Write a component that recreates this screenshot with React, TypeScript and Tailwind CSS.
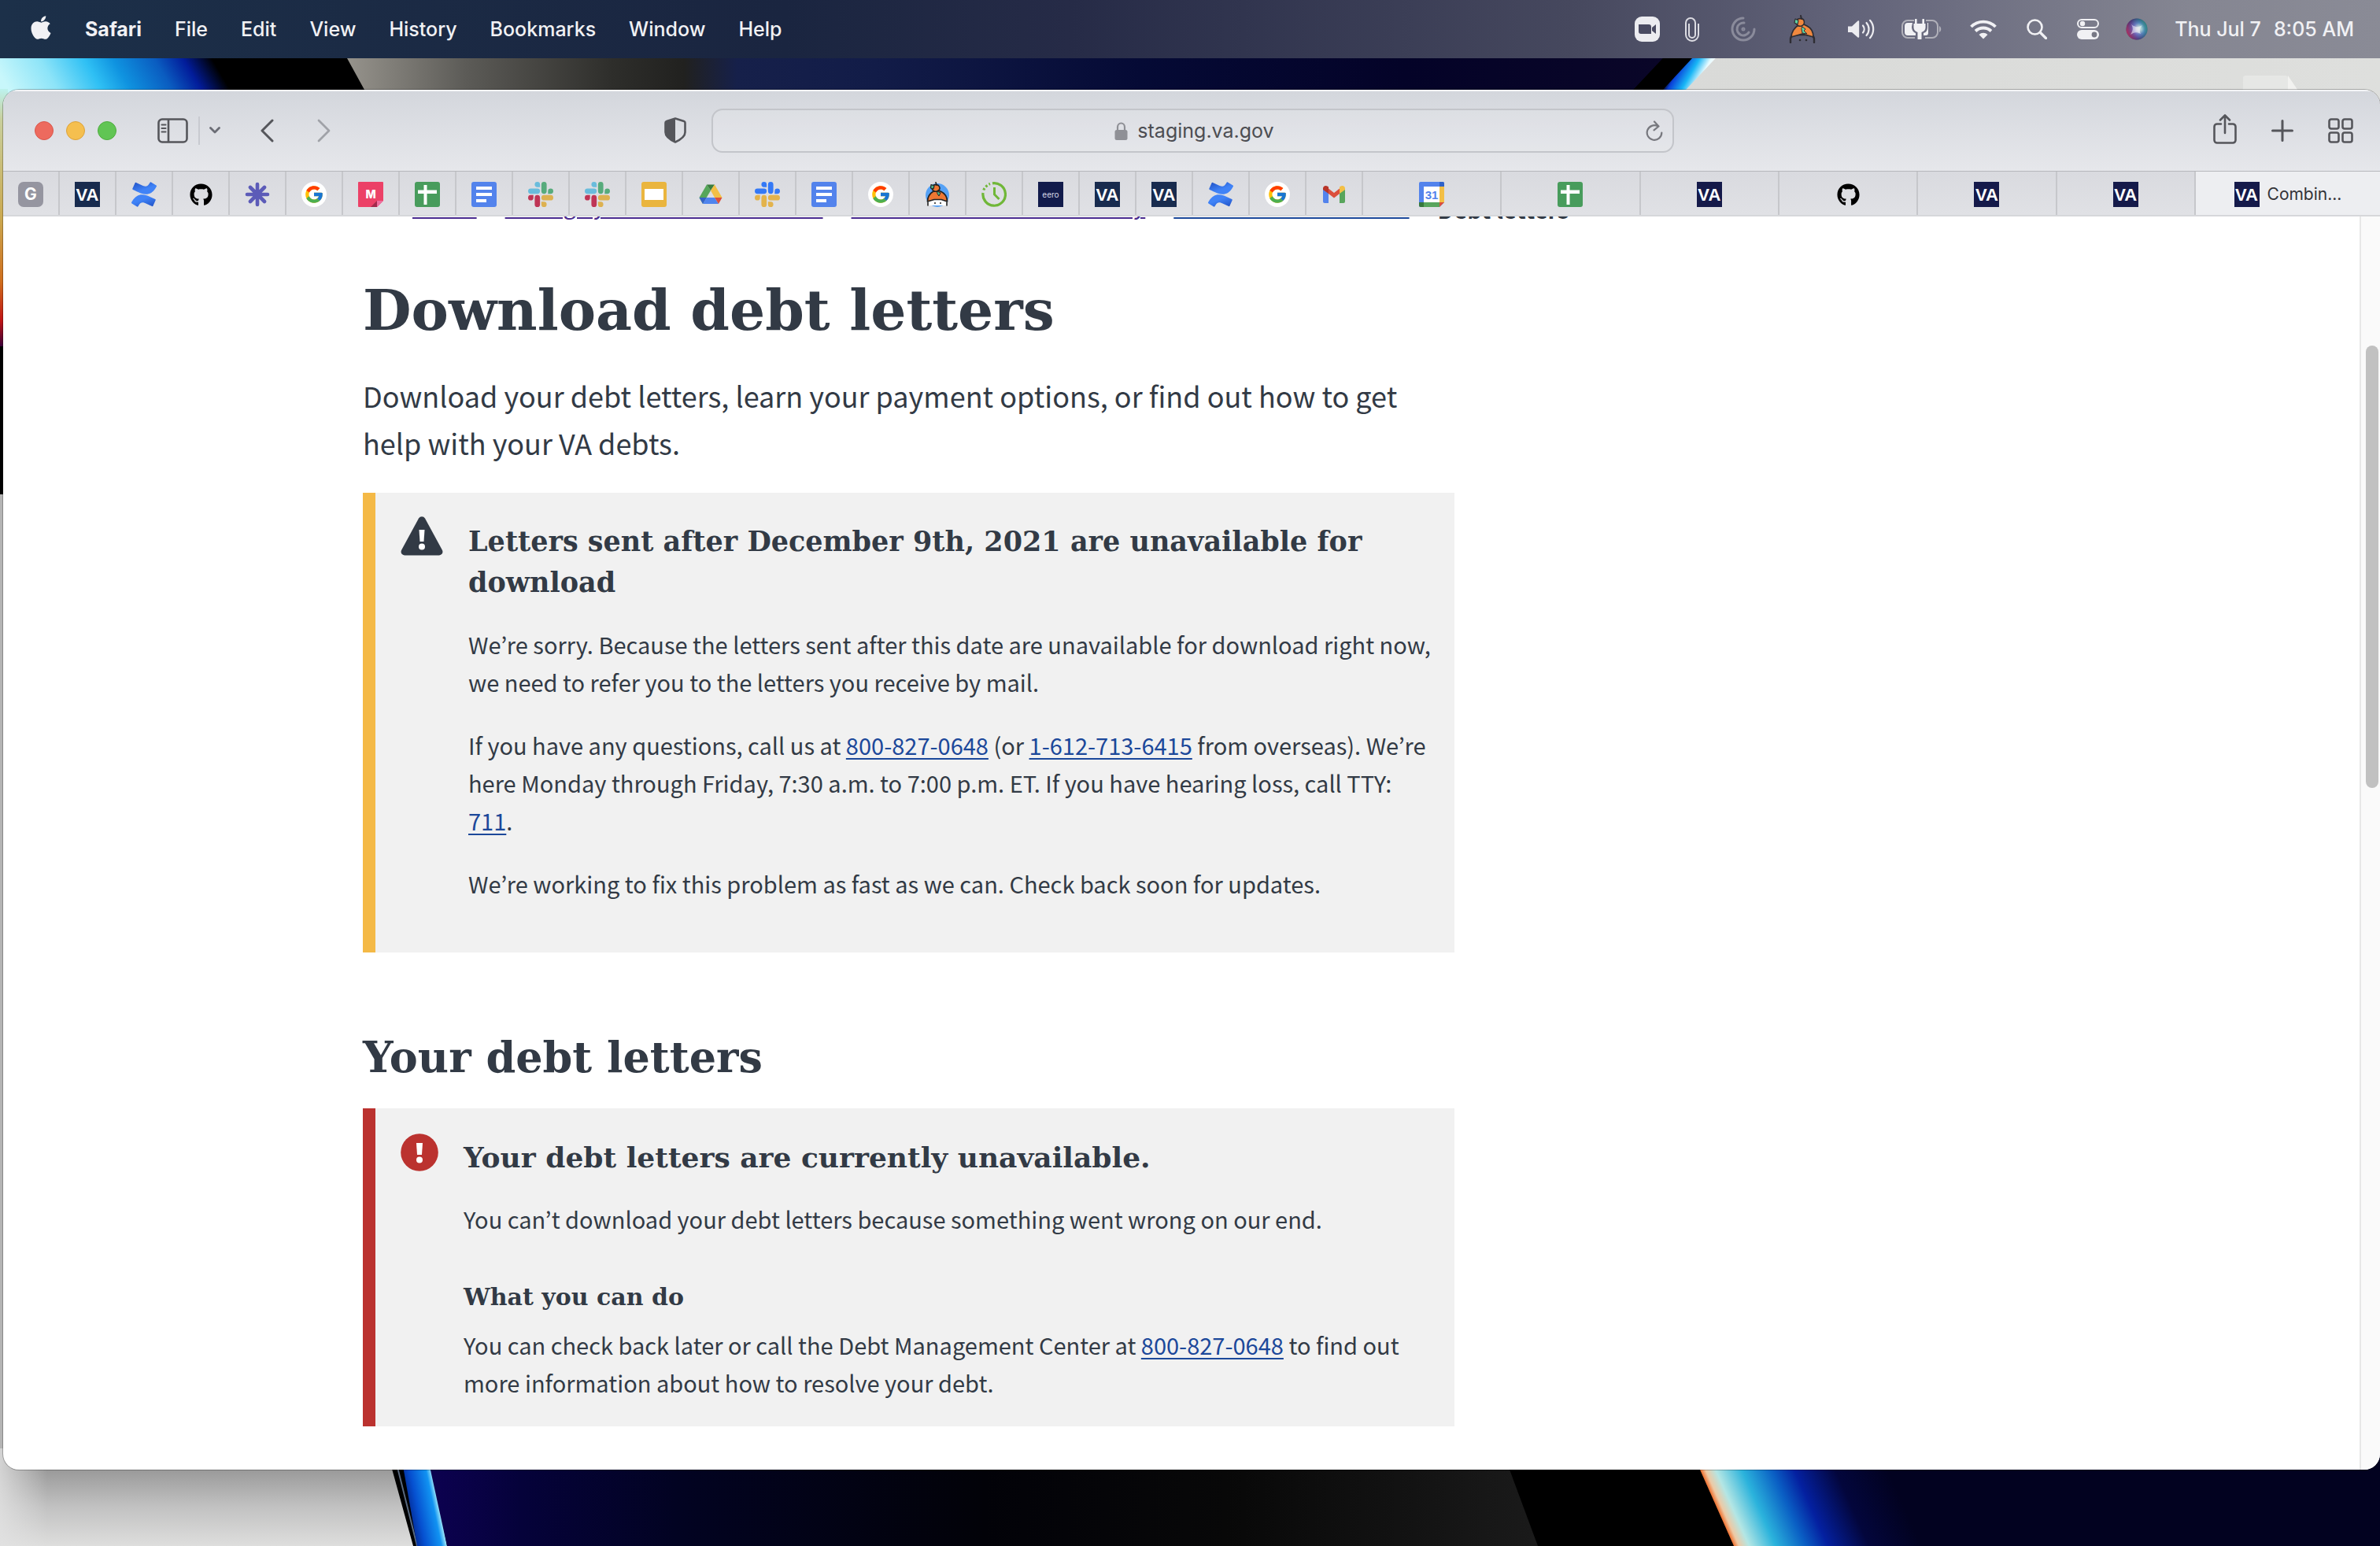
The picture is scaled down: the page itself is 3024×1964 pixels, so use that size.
import React from "react";
import { FaApple, FaGithub } from "react-icons/fa";
import { FcGoogle } from "react-icons/fc";

const SERIF = "font-['DejaVu_Serif',serif] font-bold";
const SANS = "font-['Noto_Sans_CJK_KR','Noto_Sans',sans-serif]";

/* ---------- wallpaper ---------- */

function Wallpaper() {
  return (
    <svg
      className="absolute inset-0 h-full w-full"
      viewBox="0 0 3024 1964"
      preserveAspectRatio="none"
      aria-hidden="true"
    >
      <defs>
        <linearGradient id="w-tl" x1="0" x2="208" y1="94" y2="-29" gradientUnits="userSpaceOnUse">
          <stop offset="0" stopColor="#c8f7fb" />
          <stop offset="0.22" stopColor="#8de4f8" />
          <stop offset="0.42" stopColor="#2fc0f4" />
          <stop offset="0.55" stopColor="#0f93e0" />
          <stop offset="0.74" stopColor="#0a5cc0" />
          <stop offset="0.87" stopColor="#021c9a" />
          <stop offset="1" stopColor="#000" />
        </linearGradient>
        <linearGradient id="w-tm" x1="441" x2="2120" y1="0" y2="0" gradientUnits="userSpaceOnUse">
          <stop offset="0" stopColor="#96938c" />
          <stop offset="0.09" stopColor="#5c5b57" />
          <stop offset="0.2" stopColor="#2e2e2b" />
          <stop offset="0.255" stopColor="#21211f" />
          <stop offset="0.295" stopColor="#16204a" />
          <stop offset="0.4" stopColor="#121c48" />
          <stop offset="0.6" stopColor="#050a35" />
          <stop offset="0.8" stopColor="#040328" />
          <stop offset="1" stopColor="#0a0628" />
        </linearGradient>
        <linearGradient id="w-ts" x1="2122" x2="2160" y1="95" y2="117" gradientUnits="userSpaceOnUse">
          <stop offset="0" stopColor="#000" />
          <stop offset="0.15" stopColor="#0a3fd8" />
          <stop offset="0.5" stopColor="#18b6f6" />
          <stop offset="0.8" stopColor="#e8fbff" />
          <stop offset="1" stopColor="#fafafa" />
        </linearGradient>
        <linearGradient id="w-tr" x1="2140" x2="3024" y1="0" y2="0" gradientUnits="userSpaceOnUse">
          <stop offset="0" stopColor="#d9dad8" />
          <stop offset="1" stopColor="#dedfdd" />
        </linearGradient>
        <linearGradient id="w-l" x1="0" x2="0" y1="113" y2="440" gradientUnits="userSpaceOnUse">
          <stop offset="0" stopColor="#bdf2ee" />
          <stop offset="0.12" stopColor="#c9cf9c" />
          <stop offset="0.5" stopColor="#cba950" />
          <stop offset="0.75" stopColor="#cf6d1c" />
          <stop offset="0.9" stopColor="#c01414" />
          <stop offset="1" stopColor="#3a0038" />
        </linearGradient>
        <linearGradient id="w-bl" x1="0" x2="0" y1="1866" y2="1964" gradientUnits="userSpaceOnUse">
          <stop offset="0" stopColor="#999" />
          <stop offset="0.5" stopColor="#c2c2c2" />
          <stop offset="1" stopColor="#dededd" />
        </linearGradient>
        <linearGradient id="w-blx" x1="0" x2="60" y1="0" y2="0" gradientUnits="userSpaceOnUse">
          <stop offset="0" stopColor="#e2e2e2" stopOpacity="0.8" />
          <stop offset="1" stopColor="#e2e2e2" stopOpacity="0" />
        </linearGradient>
        <linearGradient id="w-bs" x1="512" x2="556" y1="1915" y2="1906" gradientUnits="userSpaceOnUse">
          <stop offset="0" stopColor="#02187a" />
          <stop offset="0.4" stopColor="#0650d0" />
          <stop offset="0.85" stopColor="#1193f2" />
          <stop offset="1" stopColor="#9fe8fa" />
        </linearGradient>
        <linearGradient id="w-bm" x1="550" x2="1950" y1="0" y2="0" gradientUnits="userSpaceOnUse">
          <stop offset="0" stopColor="#0c0150" />
          <stop offset="0.08" stopColor="#05023a" />
          <stop offset="0.22" stopColor="#020322" />
          <stop offset="0.5" stopColor="#020208" />
          <stop offset="0.72" stopColor="#080808" />
          <stop offset="1" stopColor="#1a1a1a" />
        </linearGradient>
        <linearGradient id="w-br" x1="2182" x2="2381" y1="1915" y2="1827" gradientUnits="userSpaceOnUse">
          <stop offset="0" stopColor="#f0793a" />
          <stop offset="0.025" stopColor="#eec9a4" />
          <stop offset="0.08" stopColor="#b4e6e4" />
          <stop offset="0.22" stopColor="#2bb3dc" />
          <stop offset="0.38" stopColor="#0a5fc4" />
          <stop offset="0.5" stopColor="#0420a0" />
          <stop offset="0.72" stopColor="#03063c" />
          <stop offset="1" stopColor="#020220" />
        </linearGradient>
      </defs>
      <rect width="3024" height="1964" fill="#000" />
      <rect y="60" width="310" height="70" fill="url(#w-tl)" />
      <path d="M433 60 441 74 463 114 470 130H2060L2126 60Z" fill="url(#w-tm)" />
      <path d="M2126 60 2064 130H2098L2163 60Z" fill="#000" />
      <path d="M2163 60 2098 130H2135L2193 60Z" fill="url(#w-ts)" />
      <path d="M2193 60 2127 130H3024V60Z" fill="url(#w-tr)" />
      <rect x="2850" y="96" width="57" height="30" rx="3" fill="#e6e7e5" />
      <path d="M2907 96V130H2930Z" fill="#f2f2f0" />
      <rect y="113" width="10" height="327" fill="url(#w-l)" />
      <rect y="628" width="10" height="1242" fill="#b4b4b4" />
      <path d="M0 1840H490L498 1866 525 1964H0Z" fill="url(#w-bl)" />
      <path d="M0 1840H60V1964H0Z" fill="url(#w-blx)" />
      <path d="M504 1860 530 1964" stroke="#5a6a80" strokeWidth="2" />
      <path d="M508 1840 530 1964H568L545 1840Z" fill="url(#w-bs)" />
      <path d="M541 1840 568 1964H1954L1908 1840Z" fill="url(#w-bm)" />
      <path d="M2148 1840 2203 1964H3024V1840Z" fill="url(#w-br)" />
    </svg>
  );
}

/* ---------- menu bar ---------- */

const MENUS = ["File", "Edit", "View", "History", "Bookmarks", "Window", "Help"];

function ZoomIcon() {
  return (
    <svg width="32" height="32" viewBox="0 0 32 32">
      <rect width="32" height="32" rx="9" fill="#ececf0" />
      <path d="M5 10h13a3 3 0 0 1 3 3v9H8a3 3 0 0 1-3-3ZM22 14l5-4v12l-5-4Z" fill="#4a4b62" />
    </svg>
  );
}

function ClipIcon() {
  return (
    <svg width="18" height="32" viewBox="0 0 18 32" fill="none" stroke="#dcdce2" strokeWidth="2">
      <path d="M17 9v14a8 8 0 0 1-16 0V8a6 6 0 0 1 12 0v15a4 4 0 0 1-8 0V9" />
    </svg>
  );
}

function SwirlIcon() {
  return (
    <svg width="32" height="32" viewBox="0 0 32 32" fill="none" stroke="#8a8b9b" strokeWidth="3" strokeLinecap="round">
      <path d="M16 2a14 14 0 1 0 14 14" />
      <path d="M17 8a8 8 0 1 0 6 12" />
      <circle cx="16" cy="16" r="1" />
    </svg>
  );
}

function MascotIcon() {
  return (
    <svg width="34" height="36" viewBox="0 0 34 36" strokeLinejoin="round" strokeLinecap="round">
      <path d="M2 35v-5C3 24 9 25 17 25s14-1 15 5v5" fill="none" stroke="#2e2d33" strokeWidth="2.4" />
      <path d="M12 13 17 11 23 14C29 17 31 23 31 28L24 26 17 24 10 26 3 28C3 22 7 16 12 13Z" fill="#f0883e" stroke="#2e2d33" strokeWidth="1.800" />
      <path d="M10 6C12 4 18 4 19 7s0 6-3 7-7-1-7-4Z" fill="#f0883e" stroke="#2e2d33" strokeWidth="1.600" />
      <path d="M8 5 12 7 11 12 7 10Z" fill="#5fd3a2" stroke="#2e2d33" strokeWidth="1.2" />
      <path d="M15 1 16 5" stroke="#2e2d33" strokeWidth="2" />
      <path d="M17 15 21 18 19 20 23 24 17 23 16 18Z" fill="#5fd3a2" stroke="#2e2d33" strokeWidth="1" />
      <circle cx="14" cy="32" r="1.3" fill="#2e2d33" />
      <circle cx="22" cy="32" r="1.3" fill="#2e2d33" />
    </svg>
  );
}

function SpeakerIcon() {
  return (
    <svg width="35" height="26" viewBox="0 0 35 26" fill="none" stroke="#ececf0" strokeWidth="2.2" strokeLinecap="round">
      <path d="M1 9.500h5L13.500 2.500a1 1 0 0 1 1.700.7v19.600a1 1 0 0 1-1.700.7L6 17H1Z" fill="#ececf0" stroke="none" />
      <path d="M20 8.500a7 7 0 0 1 0 9M24.500 5a12 12 0 0 1 0 16M29 1.800a17 17 0 0 1 0 22.400" />
    </svg>
  );
}

function BatteryIcon() {
  return (
    <svg width="51" height="26" viewBox="0 0 51 26">
      <path d="M16 2H8a7 7 0 0 0-7 7v8a7 7 0 0 0 7 7h9M31 2h8a7 7 0 0 1 7 7v8a7 7 0 0 1-7 7h-9" fill="none" stroke="#b0b0b9" strokeWidth="2" />
      <path d="M48 9c3 1.500 3 6.500 0 8Z" fill="#b0b0b9" />
      <path d="M14 5H8a4 4 0 0 0-4 4v8a4 4 0 0 0 4 4h10v-3c-3-1-5-4-5-8ZM33 5v5c0 4-1 7-5 8v3h3a3 3 0 0 0 3-3V5Z" fill="#f1f1f4" />
      <path d="M17 6V1a1.300 1.300 0 0 1 2.600 0v5h6.800V1A1.300 1.300 0 0 1 29 1v5h1.500v5c0 3-2 5-5 6v8a2 2 0 0 1-5 0v-8c-3-1-5-3-5-6V6Z" fill="#f1f1f4" />
    </svg>
  );
}

function WifiIcon() {
  return (
    <svg width="34" height="25" viewBox="0 0 34 25" fill="none" stroke="#f1f1f4" strokeWidth="3.800">
      <path d="M1.500 9a22 22 0 0 1 31 0M7 14.500a14.500 14.500 0 0 1 20 0" />
      <path d="M17 24.500 11.500 19a8 8 0 0 1 11 0Z" fill="#f1f1f4" stroke="none" />
    </svg>
  );
}

function SearchIcon() {
  return (
    <svg width="26" height="26" viewBox="0 0 26 26" fill="none" stroke="#f1f1f4" strokeWidth="2.600" strokeLinecap="round">
      <circle cx="10.500" cy="10.500" r="9" />
      <path d="m17.500 17.500 7 7" strokeWidth="3.200" />
    </svg>
  );
}

function ControlIcon() {
  return (
    <svg width="28" height="26" viewBox="0 0 28 26">
      <rect x="1" y="1" width="26" height="10" rx="5" fill="none" stroke="#f1f1f4" strokeWidth="2" />
      <circle cx="7" cy="6" r="3.200" fill="#f1f1f4" />
      <rect y="14" width="28" height="12" rx="6" fill="#f1f1f4" />
      <circle cx="22" cy="20" r="3.400" fill="#777885" />
    </svg>
  );
}

function SiriIcon() {
  return (
    <svg width="28" height="28" viewBox="0 0 28 28">
      <defs>
        <radialGradient id="siri-a" cx="0.6" cy="0.48" r="0.55">
          <stop offset="0" stopColor="#fff" />
          <stop offset="0.2" stopColor="#d9eafc" />
          <stop offset="0.5" stopColor="#5c7fd4" />
          <stop offset="1" stopColor="#1d2b66" />
        </radialGradient>
        <linearGradient id="siri-b" x1="0" x2="1" y1="0.6" y2="0.2">
          <stop offset="0" stopColor="#e0355f" />
          <stop offset="0.35" stopColor="#a33b86" stopOpacity="0.4" />
          <stop offset="0.7" stopColor="#2a9d6d" stopOpacity="0.4" />
          <stop offset="1" stopColor="#2a9d6d" />
        </linearGradient>
      </defs>
      <circle cx="14" cy="14" r="13.500" fill="url(#siri-a)" />
      <circle cx="14" cy="14" r="13.500" fill="url(#siri-b)" opacity="0.75" />
      <path d="M7 8c5 4 9 4 14 1-3 4-4 7-2 11-5-3-9-2-13 1 3-5 4-8 1-13Z" fill="#fff" opacity="0.5" />
    </svg>
  );
}

function MenuBar() {
  return (
    <header className="relative flex h-[74px] shrink-0 items-center justify-between bg-[linear-gradient(90deg,#1c3049_0%,#1a2540_33%,#262b47_45%,#46485e_66%,#63647a_78%,#858692_92%,#8a8b96_100%)] pl-[38px] pr-[33px] font-['Inter',sans-serif] text-[25px] leading-8 font-medium text-[#f1f1f4]">
      <nav aria-label="Menu bar" className="flex items-center gap-[42px]">
        <button type="button" aria-label="Apple menu" className="-mt-1">
          <FaApple className="h-[34px] w-[28px]" />
        </button>
        <button type="button" className="font-bold">Safari</button>
        {MENUS.map((m) => (
          <button type="button" key={m}>{m}</button>
        ))}
      </nav>
      <div className="flex items-center">
        <div className="mr-[34px] flex items-center">
          <button type="button" aria-label="Zoom" className="mr-8"><ZoomIcon /></button>
          <button type="button" aria-label="Attachments" className="mr-10"><ClipIcon /></button>
          <button type="button" aria-label="Sync" className="mr-[42px]"><SwirlIcon /></button>
          <button type="button" aria-label="Keybase" className="mr-10"><MascotIcon /></button>
          <button type="button" aria-label="Volume" className="mr-[34px]"><SpeakerIcon /></button>
          <button type="button" aria-label="Battery" className="mr-9"><BatteryIcon /></button>
          <button type="button" aria-label="Wi-Fi" className="mr-[38px]"><WifiIcon /></button>
          <button type="button" aria-label="Search" className="mr-[38px]"><SearchIcon /></button>
          <button type="button" aria-label="Control Center" className="mr-[34px]"><ControlIcon /></button>
          <button type="button" aria-label="Siri"><SiriIcon /></button>
        </div>
        <time className="flex gap-4">
          <span>Thu Jul 7</span>
          <span>8:05 AM</span>
        </time>
      </div>
    </header>
  );
}

/* ---------- toolbar ---------- */

function Toolbar() {
  return (
    <div className="grid h-[104px] shrink-0 grid-cols-[900fr_1223fr_897fr] items-center border-b border-[#b6b7bc] bg-[linear-gradient(180deg,#d3d6dc_0%,#dddfe4_50%,#e6e7eb_100%)] text-[#55565b] shadow-[inset_0_2px_0_#f4f5f7]">
      <div className="flex items-center pl-10">
        <div className="flex gap-4">
          <button type="button" aria-label="Close" className="size-6 rounded-full border border-[#d9564b] bg-[#ed6a5e]" />
          <button type="button" aria-label="Minimize" className="size-6 rounded-full border border-[#dca23a] bg-[#f5bf4f]" />
          <button type="button" aria-label="Full screen" className="size-6 rounded-full border border-[#4fac3f] bg-[#61c554]" />
        </div>
        <button type="button" aria-label="Show sidebar" className="ml-[52px]">
          <svg width="39" height="32" viewBox="0 0 39 32" fill="none" stroke="currentColor" strokeWidth="2.600">
            <rect x="1.500" y="1.500" width="36" height="29" rx="4.500" />
            <path d="M14 1.500v29" />
            <path d="M5.500 8.500h5M5.500 13h5M5.500 17.500h5" strokeWidth="2" strokeLinecap="round" />
          </svg>
        </button>
        <span className="ml-[13px] h-9 w-[2px] bg-[#c8cad0]" />
        <button type="button" aria-label="Sidebar options" className="ml-3">
          <svg width="14" height="9" viewBox="0 0 14 9" fill="none" stroke="#6b6d75" strokeWidth="2.800" strokeLinecap="round" strokeLinejoin="round">
            <path d="m1.500 1.500 5.500 5.500 5.500-5.500" />
          </svg>
        </button>
        <button type="button" aria-label="Back" className="ml-[51px]">
          <svg width="17" height="30" viewBox="0 0 17 30" fill="none" stroke="currentColor" strokeWidth="3" strokeLinecap="round" strokeLinejoin="round">
            <path d="M15 2 2 15l13 13" />
          </svg>
        </button>
        <button type="button" aria-label="Forward" className="ml-[55px]">
          <svg width="17" height="30" viewBox="0 0 17 30" fill="none" stroke="#a0a2a8" strokeWidth="2.800" strokeLinecap="round" strokeLinejoin="round">
            <path d="m2 2 13 13L2 28" />
          </svg>
        </button>
        <button type="button" aria-label="Privacy report" className="ml-auto mr-8">
          <svg width="28" height="33" viewBox="0 0 28 33">
            <path d="M14 1.500 25 5a2 2 0 0 1 1.500 2v12c0 6-6 9.500-12.500 12.500C7.500 28.500 1.500 25 1.500 19V7A2 2 0 0 1 3 5Z" fill="none" stroke="#55565b" strokeWidth="2.600" strokeLinejoin="round" />
            <path d="M14 1.500V31.500C7.500 28.500 1.500 25 1.500 19V7A2 2 0 0 1 3 5Z" fill="#55565b" />
          </svg>
        </button>
      </div>
      <div className="relative flex h-14 items-center justify-center gap-3 rounded-[14px] border-2 border-[#c3c5ca] bg-white/10 pl-1 pt-[2px] font-['Inter',sans-serif] text-[25px] text-[#4c4d52]">
        <svg width="17" height="24" viewBox="0 0 17 24">
          <path d="M4 12V6.500a4.500 5 0 0 1 9 0V12" fill="none" stroke="#8f9096" strokeWidth="2.200" />
          <rect x="0.500" y="10" width="16" height="13" rx="2.500" fill="#8f9096" />
        </svg>
        <span>staging.va.gov</span>
        <button type="button" aria-label="Reload" className="absolute right-3">
          <svg width="22" height="27" viewBox="0 0 22 27" fill="none" stroke="#77787e" strokeWidth="2.200" strokeLinecap="round" strokeLinejoin="round">
            <path d="M15.500 7.400A9.300 9.300 0 1 0 20.300 15.500M11 1.500l5.500 6-6 4.800" />
          </svg>
        </button>
      </div>
      <div className="flex items-center justify-end gap-11 pr-[34px]">
        <button type="button" aria-label="Share" className="-mt-1">
          <svg width="30" height="38" viewBox="0 0 30 38" fill="none" stroke="currentColor" strokeWidth="2.600" strokeLinecap="round" strokeLinejoin="round">
            <path d="M10 12.500H5A3.500 3.500 0 0 0 1.500 16v17A3.500 3.500 0 0 0 5 36.500h20a3.500 3.500 0 0 0 3.500-3.500V16a3.500 3.500 0 0 0-3.500-3.500h-5M15 24V2M9 7.500 15 1.500l6 6" />
          </svg>
        </button>
        <button type="button" aria-label="New tab">
          <svg width="28" height="28" viewBox="0 0 28 28" stroke="currentColor" strokeWidth="3" strokeLinecap="round">
            <path d="M14 1.500v25M1.500 14h25" />
          </svg>
        </button>
        <button type="button" aria-label="Tab overview">
          <svg width="32" height="32" viewBox="0 0 32 32" fill="none" stroke="currentColor" strokeWidth="2.600">
            <rect x="1.500" y="1.500" width="12" height="12" rx="2.500" />
            <rect x="18.500" y="1.500" width="12" height="12" rx="2.500" />
            <rect x="1.500" y="18.500" width="12" height="12" rx="2.500" />
            <rect x="18.500" y="18.500" width="12" height="12" rx="2.500" />
          </svg>
        </button>
      </div>
    </div>
  );
}

/* ---------- tab icons ---------- */

function GrayG() {
  return (
    <span className="flex size-8 items-center justify-center rounded-[7px] bg-[#9595a0] font-['Inter',sans-serif] text-[21px] font-bold text-white">G</span>
  );
}

function Va({ deep }: { deep?: boolean }) {
  return (
    <span className={`flex size-8 items-center justify-center font-['Liberation_Sans',sans-serif] text-[22px] font-bold text-white ${deep ? "bg-[#151a4a]" : "bg-[#182b4e]"}`}>VA</span>
  );
}

function Confluence() {
  return (
    <svg width="32" height="32" viewBox="0 0 24 24">
      <defs>
        <linearGradient id="cf-a" x1="1" x2="0.4" y1="1" y2="0.2">
          <stop offset="0" stopColor="#1f4fc4" />
          <stop offset="0.8" stopColor="#4083f7" />
        </linearGradient>
        <linearGradient id="cf-b" x1="0" x2="0.6" y1="0" y2="0.8">
          <stop offset="0" stopColor="#1f4fc4" />
          <stop offset="0.8" stopColor="#4083f7" />
        </linearGradient>
      </defs>
      <path fill="url(#cf-a)" d="M.87 18.257c-.248.382-.53.875-.763 1.245a.764.764 0 0 0 .255 1.040l4.965 3.054a.764.764 0 0 0 1.058-.26c.199-.332.454-.763.733-1.221 1.967-3.247 3.945-2.853 7.508-1.146l4.957 2.337a.764.764 0 0 0 1.028-.382l2.364-5.346a.764.764 0 0 0-.382-1 599.851 599.851 0 0 1-4.965-2.361C10.911 10.970 5.224 11.185.87 18.257z" />
      <path fill="url(#cf-b)" d="M23.131 5.743c.249-.405.531-.875.764-1.250a.764.764 0 0 0-.256-1.034L18.675.404a.764.764 0 0 0-1.058.26c-.195.335-.451.763-.734 1.225-1.966 3.246-3.945 2.850-7.508 1.146L4.437.694a.764.764 0 0 0-1.027.382L1.046 6.422a.764.764 0 0 0 .382 1c1.039.49 3.105 1.467 4.965 2.361 6.698 3.246 12.392 3.029 16.738-4.040z" />
    </svg>
  );
}

function Github() {
  return <FaGithub className="size-[29px] text-black" />;
}

function Asterisk() {
  return (
    <svg width="32" height="32" viewBox="0 0 32 32" stroke="#5c5bb8" strokeWidth="4.600" strokeLinecap="round">
      <path d="M16 3v26M3 16h26M7 7l18 18M25 7 7 25" />
    </svg>
  );
}

function Google() {
  return (
    <span className="flex size-8 items-center justify-center rounded-full bg-white">
      <FcGoogle className="size-[26px]" />
    </span>
  );
}

function PinkM() {
  return (
    <svg width="32" height="32" viewBox="0 0 32 32">
      <path d="M1 0h30a1 1 0 0 1 1 1v23l-8 8H1a1 1 0 0 1-1-1V1a1 1 0 0 1 1-1Z" fill="#ec4167" />
      <path d="M16 32 24 24V32Z" fill="#a32a4b" />
      <path d="M24 24h8l-8 8Z" fill="#ee6fa0" />
      <text x="16" y="21" textAnchor="middle" fontFamily="Inter, sans-serif" fontWeight="800" fontSize="14" fill="#fff">M</text>
    </svg>
  );
}

function Sheets() {
  return (
    <svg width="32" height="32" viewBox="0 0 32 32">
      <rect width="32" height="32" rx="3" fill="#489c5c" />
      <path d="M11.500 4h4v6.500H28v4.500H15.500v14h-4V15H4v-4.500h7.500Z" fill="#fff" />
    </svg>
  );
}

function Docs() {
  return (
    <svg width="32" height="32" viewBox="0 0 32 32">
      <rect width="32" height="32" rx="3" fill="#5383ec" />
      <path d="M6 6h20v4H6ZM6 14h20v4H6ZM6 22h13v4H6Z" fill="#fff" />
    </svg>
  );
}

function Slack({ colors }: { colors: [string, string, string, string] }) {
  return (
    <svg width="32" height="32" viewBox="0 0 24 24">
      {colors.map((c, i) => (
        <g key={i} fill={c} transform={`rotate(${i * 90} 12 12)`}>
          <path d="M5.042 15.165a2.528 2.528 0 0 1-2.520 2.523A2.528 2.528 0 0 1 0 15.165a2.527 2.527 0 0 1 2.522-2.520h2.520v2.520z" />
          <path d="M6.313 15.165a2.527 2.527 0 0 1 2.521-2.520 2.527 2.527 0 0 1 2.521 2.520v6.313A2.528 2.528 0 0 1 8.834 24a2.528 2.528 0 0 1-2.521-2.522v-6.313z" />
        </g>
      ))}
    </svg>
  );
}

function SlackTeam() {
  return <Slack colors={["#bf3555", "#69bcdc", "#57ab7c", "#ddb150"]} />;
}

function SlackBlue() {
  return <Slack colors={["#e3b34c", "#3479f6", "#3479f6", "#e3b34c"]} />;
}

function Slides() {
  return (
    <svg width="32" height="32" viewBox="0 0 32 32">
      <rect width="32" height="32" rx="3" fill="#eab53e" />
      <rect x="4" y="9" width="24" height="14" fill="#fff" />
    </svg>
  );
}

function Drive() {
  return (
    <svg width="32" height="32" viewBox="0 0 32 32">
      <path d="M11 3.500 1.500 20 6 28 16 11Z" fill="#56a65a" />
      <path d="M11 3.500h10L16 11Z" fill="#3a7d3e" />
      <path d="M21 3.500 30.500 20H21L16 11Z" fill="#f3bf45" />
      <path d="M1.500 20H11L6 28Z" fill="#3563c6" />
      <path d="M11 20h10l5 8H6Z" fill="#4f84ee" />
      <path d="M21 20h9.500L26 28Z" fill="#db4f3c" />
    </svg>
  );
}

function Keybase() {
  return (
    <svg width="32" height="32" viewBox="0 0 32 32" strokeLinejoin="round" strokeLinecap="round">
      <circle cx="16" cy="17" r="15" fill="#55a1f5" />
      <path d="M4 30V26C6 20 11 23 16 23s10-3 12 3v4Z" fill="#fff" />
      <path d="M4 30V26M28 30V26" stroke="#222" strokeWidth="1.600" />
      <path d="M11 12 16 10.500 21 12.500C26 15 28.500 20 28.500 25L21 22.500 12 22.500 3.500 25C3.500 20 6 15 11 12Z" fill="#ee7733" stroke="#222" strokeWidth="1.700" />
      <path d="M10 5C12 3 17 3 18.500 6s0 5-3 6-6.500-1-6.500-4Z" fill="#ee7733" stroke="#222" strokeWidth="1.600" />
      <path d="M8 3.500 12 5 11 9 7.500 8Z" fill="#4fb98b" stroke="#222" strokeWidth="1.200" />
      <path d="M14 0.800 15 4" stroke="#222" strokeWidth="1.600" />
      <path d="M16 12 20 14 18 18 16 15Z" fill="#4fb98b" stroke="#222" strokeWidth="1" />
      <circle cx="13" cy="27" r="1" fill="#222" />
      <circle cx="20" cy="27" r="1" fill="#222" />
    </svg>
  );
}

function GreenClock() {
  return (
    <svg width="32" height="32" viewBox="0 0 32 32" fill="none" stroke="#70b738" strokeWidth="3.200">
      <path d="M14 1.800A14.300 14.300 0 1 1 2 14" />
      <path d="M16.500 7v9l6 6" strokeWidth="3" />
      <path d="M2.800 10.500A14.300 14.300 0 0 1 11 2.600" strokeDasharray="2.600 2.400" />
    </svg>
  );
}

function Eero() {
  return (
    <span className="flex size-8 items-center justify-center bg-[#121b4b] font-['Inter',sans-serif] text-[10px] text-[#d8dae8]">eero</span>
  );
}

function Gmail() {
  return (
    <svg width="32" height="32" viewBox="0 0 32 32">
      <path d="M2 9v16a2 2 0 0 0 2 2h5V14Z" fill="#5383ec" />
      <path d="M30 9v16a2 2 0 0 1-2 2h-5V14Z" fill="#58a55c" />
      <path d="M9 8.500 16 14l7-5.500V15l-7 5.500L9 15Z" fill="#db4f3c" />
      <path d="M2 8.500C2 5 5.500 4 8 5.800L9 6.500V15L2 10Z" fill="#b83428" />
      <path d="M30 8.500C30 5 26.500 4 24 5.800L23 6.500V15l7-5Z" fill="#f3bf45" />
    </svg>
  );
}

function Calendar() {
  return (
    <svg width="32" height="32" viewBox="0 0 32 32">
      <path d="M2 0h28a2 2 0 0 1 2 2v24l-6 6H2a2 2 0 0 1-2-2V2a2 2 0 0 1 2-2Z" fill="#5383ec" />
      <path d="M26 0h4a2 2 0 0 1 2 2v4h-6Z" fill="#2f62c9" />
      <path d="M26 6h6v20h-6Z" fill="#f3bf45" />
      <path d="M6 26h20v6H6Z" fill="#58a55c" />
      <path d="M0 26h6v6H2a2 2 0 0 1-2-2Z" fill="#36783c" />
      <path d="M26 26h6l-6 6Z" fill="#db4f3c" />
      <path d="M6 6h20v20H6Z" fill="#fff" />
      <text x="16" y="21.500" textAnchor="middle" fontFamily="Liberation Sans, sans-serif" fontWeight="700" fontSize="15" fill="#5383ec">31</text>
    </svg>
  );
}

function VaDeep() {
  return <Va deep />;
}

const PINNED: [string, () => React.ReactElement][] = [
  ["G", GrayG],
  ["VA", () => <Va />],
  ["Confluence", Confluence],
  ["GitHub", Github],
  ["Asterisk", Asterisk],
  ["Google", Google],
  ["Mural", PinkM],
  ["Sheets", Sheets],
  ["Docs", Docs],
  ["Slack", SlackTeam],
  ["Slack threads", SlackTeam],
  ["Slides", Slides],
  ["Drive", Drive],
  ["Slack status", SlackBlue],
  ["Docs notes", Docs],
  ["Google search", Google],
  ["Keybase", Keybase],
  ["Time off", GreenClock],
  ["eero", Eero],
  ["VA forms", () => <Va />],
  ["VA design", () => <Va />],
  ["Confluence wiki", Confluence],
  ["Google results", Google],
  ["Gmail", Gmail],
];

const OPEN: [string, () => React.ReactElement][] = [
  ["Calendar", Calendar],
  ["Spreadsheet", Sheets],
  ["VA.gov", VaDeep],
  ["Pull request", Github],
  ["VA.gov staging", VaDeep],
  ["VA.gov debts", VaDeep],
];

function TabBar() {
  return (
    <div className="flex h-[57px] shrink-0 border-b-2 border-[#d6d7da] bg-[linear-gradient(180deg,#d9dadf_0%,#e0e1e5_100%)]">
      {PINNED.map(([name, Icon]) => (
        <button type="button" key={name} aria-label={name} className="flex w-[72px] items-center justify-center border-r-2 border-[#c6c7cb] pt-[3px]">
          <Icon />
        </button>
      ))}
      {OPEN.map(([name, Icon]) => (
        <button type="button" key={name} aria-label={name} className="flex flex-1 items-center justify-center border-r-2 border-[#c6c7cb] pt-[3px]">
          <Icon />
        </button>
      ))}
      <button type="button" className="flex w-[234px] items-center justify-center gap-[10px] bg-[#edeef1] pt-[3px] font-['Inter',sans-serif] text-[21px] text-[#333338]">
        <VaDeep />
        <span>Combin...</span>
      </button>
    </div>
  );
}

/* ---------- page ---------- */

function PhoneLink({ number }: { number: string }) {
  return (
    <a href={`tel:${number}`} className="text-[#1c489a] underline decoration-2 underline-offset-4">
      {number}
    </a>
  );
}

function Breadcrumbs() {
  return (
    <nav aria-label="Breadcrumb" className="-mt-9 pl-[63px] text-[29px] leading-10 text-[#4a2b8f]">
      <ol className="flex gap-9 whitespace-nowrap">
        <li><a href="#home" className="underline decoration-2 underline-offset-4">Home</a></li>
        <li><a href="#manage" className="underline decoration-2 underline-offset-4">Manage your VA debt and bills</a></li>
        <li><a href="#benefit" className="underline decoration-2 underline-offset-4">Benefit debt and bill history</a></li>
        <li><a href="#details" className="text-[#1c489a] underline decoration-2 underline-offset-4">Details for these debts</a></li>
        <li className="font-bold text-[#323a45]" aria-current="page"><span className="block pt-[6px]">Debt letters</span></li>
      </ol>
    </nav>
  );
}

function WarningIcon() {
  return (
    <svg width="54" height="50" viewBox="0 0 54 50" className="shrink-0">
      <path d="M23 2.500a4.600 4.600 0 0 1 8 0L53 43a4.600 4.600 0 0 1-4 6.500H5A4.600 4.600 0 0 1 1 43Z" fill="#323a45" />
      <path d="M23.500 17h7l-1 15h-5Z" fill="#fff" />
      <circle cx="27" cy="38.500" r="4" fill="#fff" />
    </svg>
  );
}

function ErrorIcon() {
  return (
    <svg width="48" height="48" viewBox="0 0 48 48" className="shrink-0">
      <circle cx="24" cy="24" r="23.800" fill="#bb322f" />
      <path d="M20 12h8l-1 15h-6Z" fill="#fff" />
      <circle cx="24" cy="33.500" r="4" fill="#fff" />
    </svg>
  );
}

function PageContent() {
  return (
    <main className={`w-[1387px] text-[#323a45] ${SANS}`}>
      <Breadcrumbs />
      <h1 className={`mt-[61px] text-[71px] leading-[96px] ${SERIF}`}>Download debt letters</h1>
      <p className="mt-[30px] max-w-[1340px] text-[36px] leading-[60px]">
        Download your debt letters, learn your payment options, or find out how to get help with your VA debts.
      </p>

      <section className="mt-[34px] flex gap-8 border-l-[16px] border-[#f4b946] bg-[#f1f1f1] pb-16 pl-8 pr-7 pt-[30px]">
        <WarningIcon />
        <div className="pt-[6px]">
          <h2 className={`text-[35px] leading-[52px] ${SERIF}`}>
            Letters sent after December 9th, 2021 are unavailable for download
          </h2>
          <div className="mt-7 flex flex-col gap-8 text-[29px] leading-[48px]">
            <p>
              We’re sorry. Because the letters sent after this date are unavailable for download right now, we need to
              refer you to the letters you receive by mail.
            </p>
            <p>
              If you have any questions, call us at <PhoneLink number="800-827-0648" /> (or{" "}
              <PhoneLink number="1-612-713-6415" /> from overseas). We’re here Monday through Friday, 7:30 a.m. to 7:00
              p.m. ET. If you have hearing loss, call TTY: <PhoneLink number="711" />.
            </p>
            <p>We’re working to fix this problem as fast as we can. Check back soon for updates.</p>
          </div>
        </div>
      </section>

      <h2 className={`mt-[101px] text-[54px] leading-[64px] ${SERIF}`}>Your debt letters</h2>

      <section className="mt-[33px] flex gap-8 border-l-[16px] border-[#bb322f] bg-[#f1f1f1] pb-8 pl-8 pr-7 pt-8">
        <ErrorIcon />
        <div className="pt-1 text-[29px] leading-[48px]">
          <h3 className={`text-[36px] leading-[52px] ${SERIF}`}>Your debt letters are currently unavailable.</h3>
          <p className="mt-7">You can’t download your debt letters because something went wrong on our end.</p>
          <h4 className={`mt-14 text-[30px] leading-10 ${SERIF}`}>What you can do</h4>
          <p className="mt-4">
            You can check back later or call the Debt Management Center at <PhoneLink number="800-827-0648" /> to find
            out more information about how to resolve your debt.
          </p>
        </div>
      </section>
    </main>
  );
}

export default function App() {
  return (
    <div className="relative flex h-screen flex-col overflow-hidden bg-black">
      <Wallpaper />
      <MenuBar />
      <div className="relative mb-[97px] ml-1 mt-10 flex min-h-0 flex-1 flex-col overflow-hidden rounded-[20px] bg-white shadow-[0_0_0_1px_rgba(0,0,0,0.25)]">
        <Toolbar />
        <TabBar />
        <div className="flex min-h-0 flex-1 overflow-hidden">
          <div className="min-w-0 flex-1 overflow-hidden pl-[457px]">
            <PageContent />
          </div>
          <div className="w-[26px] border-l-2 border-[#e8e8e8] bg-[#fafafa] pl-[6px] pt-[164px]">
            <div className="h-[562px] w-4 rounded-full bg-[#c1c1c1]" />
          </div>
        </div>
      </div>
    </div>
  );
}
